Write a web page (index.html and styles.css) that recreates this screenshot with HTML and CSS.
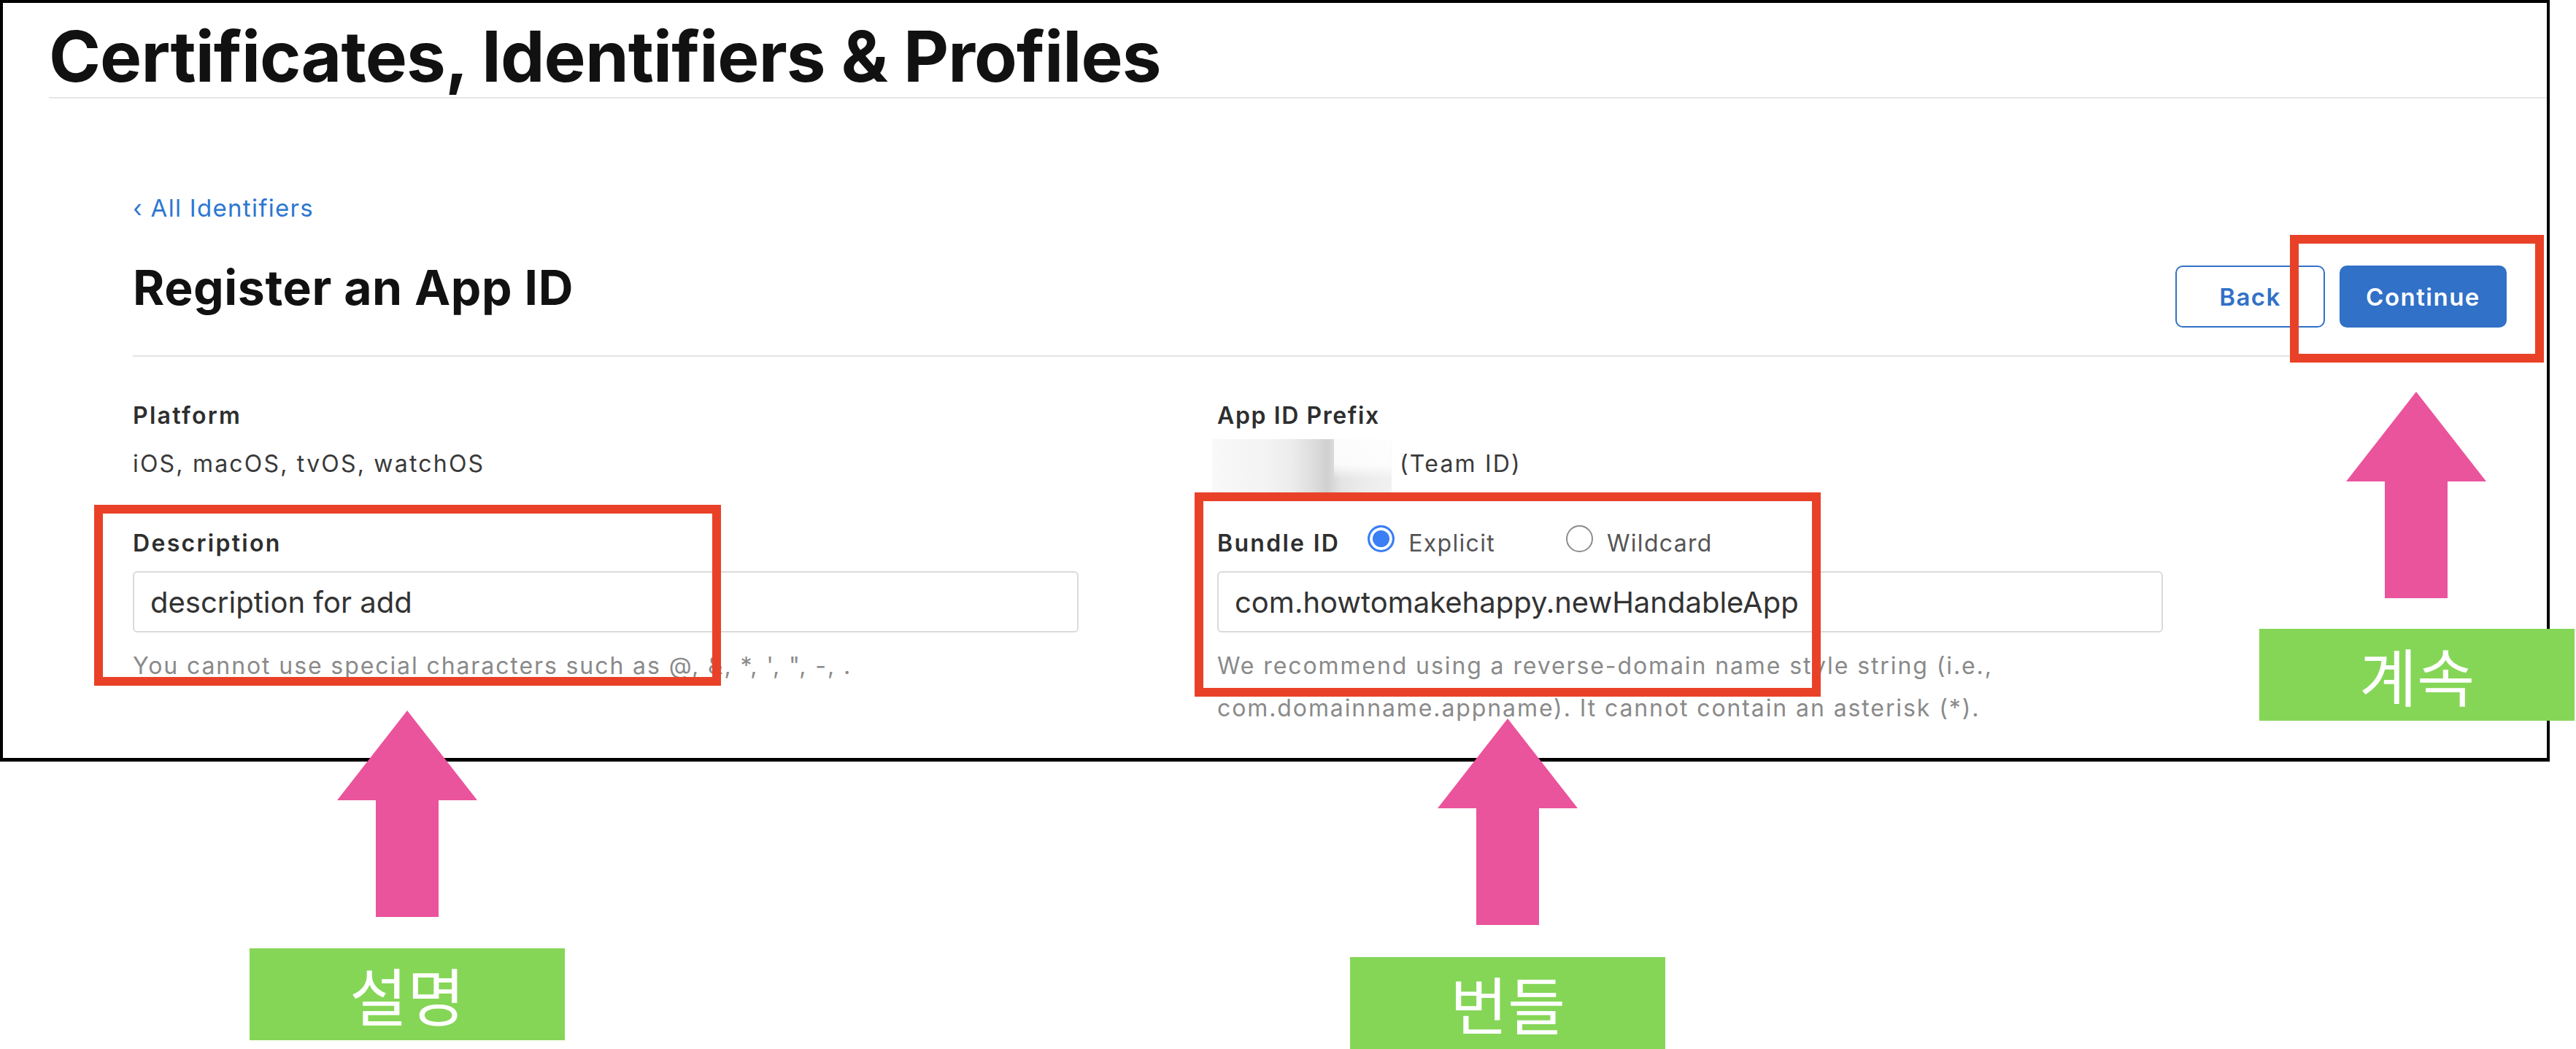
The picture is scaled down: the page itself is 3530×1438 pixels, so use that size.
FILE: index.html
```html
<!DOCTYPE html>
<html lang="ko">
  <head>
    <meta charset="UTF-8" />
    <meta name="viewport" content="width=device-width, initial-scale=1.0" />
    <title>Register an App ID</title>
    <link rel="stylesheet" href="styles.css">
  </head>
  <body>
    <div class="page">
      <div class="frame">
        <header class="site-head">
          <h1>Certificates, Identifiers &amp; Profiles</h1>
        </header>

        <main class="content">
          <a class="back-link" href="#">‹ All Identifiers</a>

          <div class="title-row">
            <h2>Register an App ID</h2>
            <div class="actions">
              <button class="btn btn-outline">Back</button>
              <button class="btn btn-primary">Continue</button>
            </div>
          </div>

          <div class="fields">
            <div class="field">
              <div class="field-label">Platform</div>
              <div class="field-value">iOS, macOS, tvOS, watchOS</div>
            </div>
            <div class="field">
              <div class="field-label tight">App ID Prefix</div>
              <div class="field-value prefix">
                <span class="blurred"></span>
                <span>(Team ID)</span>
              </div>
            </div>

            <div class="field">
              <label class="field-label" for="description">Description</label>
              <input type="text" id="description" class="text-input" value="description for add" />
              <p class="hint">You cannot use special characters such as @, &amp;, *, ', ", -, .</p>
            </div>
            <div class="field">
              <div class="field-label radio-row">
                <label for="bundle">Bundle ID</label>
                <span class="radio checked"></span>
                <span class="radio-text">Explicit</span>
                <span class="radio wildcard"></span>
                <span class="radio-text">Wildcard</span>
              </div>
              <input type="text" id="bundle" class="text-input" value="com.howtomakehappy.newHandableApp" />
              <p class="hint">We recommend using a reverse-domain name style string (i.e., com.domainname.appname). It cannot contain an asterisk (*).</p>
            </div>
          </div>
        </main>
      </div>

      <!-- annotations drawn over the screenshot -->
      <div class="mark mark-desc"></div>
      <div class="mark mark-bundle"></div>
      <div class="mark mark-continue"></div>

      <svg class="arrow arrow-desc" viewBox="0 0 192 283"><polygon points="96,0 192,123 139,123 139,283 53,283 53,123 0,123" /></svg>
      <svg class="arrow arrow-bundle" viewBox="0 0 192 283"><polygon points="96,0 192,123 139,123 139,283 53,283 53,123 0,123" /></svg>
      <svg class="arrow arrow-continue" viewBox="0 0 192 283"><polygon points="96,0 192,123 139,123 139,283 53,283 53,123 0,123" /></svg>

      <div class="tag tag-desc">설명</div>
      <div class="tag tag-bundle">번들</div>
      <div class="tag tag-continue">계속</div>
    </div>
  </body>
</html>
```

FILE: styles.css
```css
body {
  margin: 0;
  padding: 0;
  background: #fff;
  font-family: Inter, "Liberation Sans", sans-serif;
  color: #333;
}

.page {
  position: relative;
  width: 3530px;
  height: 1438px;
  overflow: hidden;
  background: #fff;
}

.frame {
  box-sizing: border-box;
  width: 3494px;
  height: 1044px;
  border: 4px solid #000;
  border-bottom-width: 5px;
}

.site-head {
  margin-left: 63px;
  padding-top: 25px;
  padding-bottom: 8px;
  border-bottom: 2px solid #e6e6e6;
}
.site-head h1 {
  margin: 0;
  font-size: 96px;
  line-height: 96px;
  font-weight: 700;
  letter-spacing: -0.9px;
  color: #111;
}

.content {
  padding: 130px 55px 0 178px;
}

.back-link {
  display: block;
  font-size: 33px;
  line-height: 40px;
  letter-spacing: 1.3px;
  color: #2c77d0;
  text-decoration: none;
}

.title-row {
  margin-top: 49px;
  display: flex;
  justify-content: space-between;
  align-items: flex-start;
  padding-bottom: 38px;
  border-bottom: 2px solid #e3e3e3;
}
.title-row h2 {
  margin: 0;
  font-size: 66px;
  line-height: 80px;
  font-weight: 700;
  letter-spacing: 0.6px;
  color: #111;
}

.actions {
  margin-top: 10px;
  display: flex;
  gap: 20px;
}
.btn {
  box-sizing: border-box;
  height: 85px;
  border-radius: 10px;
  font-family: inherit;
  font-size: 33px;
  font-weight: 600;
  letter-spacing: 1.5px;
  cursor: pointer;
}
.btn-outline {
  width: 205px;
  border: 2px solid #3171c7;
  background: #fff;
  color: #3171c7;
}
.btn-primary {
  width: 229px;
  border: none;
  background: #3171c7;
  color: #fff;
}

.fields {
  margin-top: 61px;
  display: grid;
  grid-template-columns: 1486px 1fr;
  row-gap: 69px;
}

.field-label {
  display: block;
  font-size: 32px;
  line-height: 40px;
  font-weight: 600;
  letter-spacing: 2.3px;
  color: #2e2e2e;
}
.field-label.tight {
  letter-spacing: 1.6px;
}
.field-value {
  margin-top: 26px;
  font-size: 32px;
  line-height: 40px;
  letter-spacing: 2.2px;
  color: #3a3a3a;
}

.prefix {
  display: flex;
  align-items: flex-start;
}
.blurred {
  width: 246px;
  height: 77px;
  margin: -14px 11px -23px -7px;
  background:
    linear-gradient(180deg, rgba(255, 255, 255, 0.9) 0%, rgba(255, 255, 255, 0.85) 45%, rgba(255, 255, 255, 0) 70%) right / 32% 100% no-repeat,
    linear-gradient(90deg, #f9f9f9 0%, #f3f3f3 30%, #ececec 45%, #dcdcdc 57%, #d0d0d0 64%, #e4e4e4 72%, #ececec 85%, #f1f1f1 100%);
}

.radio-row {
  display: flex;
  align-items: center;
}
.radio {
  box-sizing: border-box;
  width: 37px;
  height: 37px;
  border-radius: 50%;
  border: 2px solid #8c8c8c;
  background: #fff;
  align-self: flex-start;
  margin-top: -5px;
  margin-left: 38px;
}
.radio.checked {
  border: 3px solid #3a7ff5;
  background: #3a7ff5;
  box-shadow: inset 0 0 0 4px #fff;
}
.radio.wildcard {
  margin-left: 97px;
}
.radio-text {
  margin-left: 19px;
  font-weight: 400;
  letter-spacing: 1.3px;
  color: #555;
}

.text-input {
  display: block;
  box-sizing: border-box;
  width: 1296px;
  height: 84px;
  margin-top: 18px;
  padding: 0 22px;
  border: 2px solid #dadada;
  border-radius: 6px;
  font-family: inherit;
  font-size: 40px;
  color: #333;
  outline: none;
}

.hint {
  width: 1296px;
  margin: 17px 0 0;
  font-size: 32px;
  line-height: 58px;
  letter-spacing: 1.9px;
  color: #8a8a8a;
}

/* annotation layer */
.mark {
  position: absolute;
  box-sizing: border-box;
  border: 12px solid #e94128;
}
.mark-desc {
  left: 129px;
  top: 692px;
  width: 859px;
  height: 248px;
}
.mark-bundle {
  left: 1637px;
  top: 675px;
  width: 858px;
  height: 280px;
}
.mark-continue {
  left: 3138px;
  top: 322px;
  width: 348px;
  height: 175px;
}

.arrow {
  position: absolute;
  width: 192px;
  height: 283px;
  fill: #ea549c;
}
.arrow-desc {
  left: 462px;
  top: 974px;
}
.arrow-bundle {
  left: 1970px;
  top: 985px;
}
.arrow-continue {
  left: 3215px;
  top: 537px;
}

.tag {
  position: absolute;
  width: 432px;
  height: 126px;
  background: #85d657;
  color: #fff;
  font-family: "Noto Sans CJK KR", sans-serif;
  font-size: 86px;
  line-height: 126px;
  text-align: center;
}
.tag-desc {
  left: 342px;
  top: 1300px;
}
.tag-bundle {
  left: 1850px;
  top: 1312px;
}
.tag-continue {
  left: 3096px;
  top: 862px;
}
```
